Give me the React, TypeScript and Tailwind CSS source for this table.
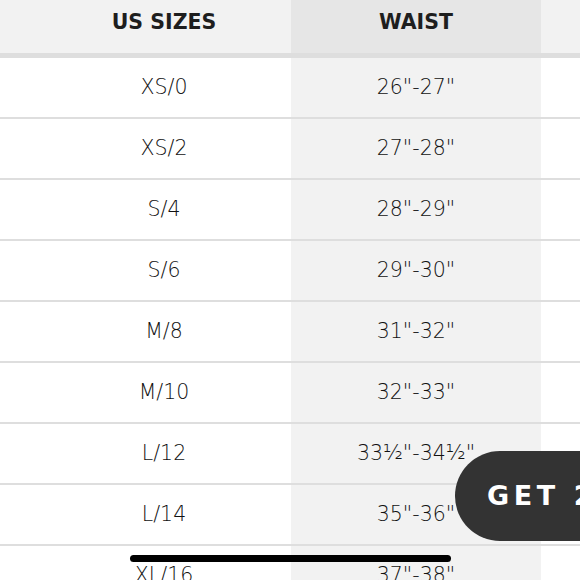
const rows = [
  ["XS/0", "26\"-27\""],
  ["XS/2", "27\"-28\""],
  ["S/4", "28\"-29\""],
  ["S/6", "29\"-30\""],
  ["M/8", "31\"-32\""],
  ["M/10", "32\"-33\""],
  ["L/12", "33½\"-34½\""],
  ["L/14", "35\"-36\""],
  ["XL/16", "37\"-38\""],
];

export default function App() {
  return (
    <div
      className="relative w-[580px] h-[580px] overflow-hidden bg-white text-[#1e1e1e]"
      style={{ fontFamily: "'DejaVu Sans', sans-serif" }}
    >
      {/* header */}
      <div className="flex h-[53px] border-b-[5px] border-[#dedede] box-content">
        <div className="w-[291px] shrink-0 pl-[37px] pb-[8px] bg-[#f2f2f2] flex items-center justify-center text-[20.5px] font-bold">
          US SIZES
        </div>
        <div className="w-[250px] shrink-0 pb-[8px] bg-[#e6e6e6] flex items-center justify-center text-[20.5px] font-bold">
          WAIST
        </div>
        <div className="flex-1 bg-[#f2f2f2]" />
      </div>

      {rows.map(([size, waist]) => (
        <div key={size} className="flex h-[59px] border-b-2 border-[#dedede] box-content text-[#111111]">
          <div className="w-[291px] shrink-0 pl-[37px] flex items-center justify-center text-[20.5px] font-light">
            {size}
          </div>
          <div className="w-[250px] shrink-0 bg-[#f2f2f2] flex items-center justify-center text-[20.5px] font-light">
            {waist}
          </div>
          <div className="flex-1" />
        </div>
      ))}

      {/* promo pill */}
      <div className="absolute left-[455px] top-[451px] h-[90px] w-[300px] rounded-l-full bg-[#333333] flex items-center pl-[32px]">
        <span className="text-white text-[27px] font-bold tracking-[0.17em] whitespace-nowrap">GET 20% OFF</span>
      </div>

      {/* home indicator */}
      <div className="absolute left-[130px] top-[555px] w-[321px] h-[7px] rounded-full bg-black" />
    </div>
  );
}
